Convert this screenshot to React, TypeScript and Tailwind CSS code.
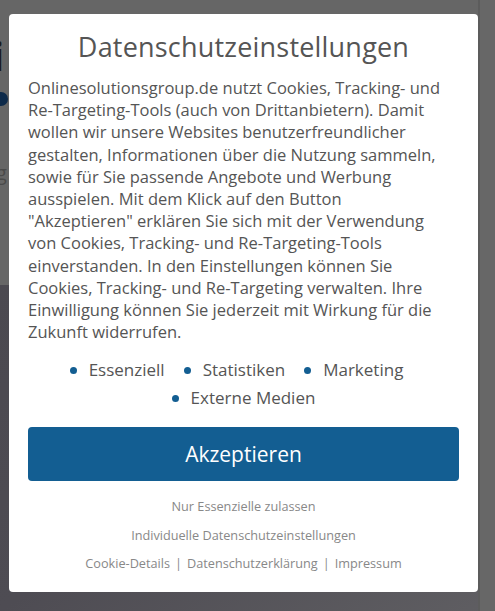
import React from "react";

const bodyLines = [
  "Onlinesolutionsgroup.de nutzt Cookies, Tracking- und",
  "Re-Targeting-Tools (auch von Drittanbietern). Damit",
  "wollen wir unsere Websites benutzerfreundlicher",
  "gestalten, Informationen über die Nutzung sammeln,",
  "sowie für Sie passende Angebote und Werbung",
  "ausspielen. Mit dem Klick auf den Button",
  "\"Akzeptieren\" erklären Sie sich mit der Verwendung",
  "von Cookies, Tracking- und Re-Targeting-Tools",
  "einverstanden. In den Einstellungen können Sie",
  "Cookies, Tracking- und Re-Targeting verwalten. Ihre",
  "Einwilligung können Sie jederzeit mit Wirkung für die",
  "Zukunft widerrufen.",
];

function Bullet({ label }: { label: string }) {
  return (
    <span className="inline-flex items-center gap-[12px]">
      <span className="w-[7px] h-[7px] rounded-full bg-[#135e92]" />
      <span>{label}</span>
    </span>
  );
}

export default function App() {
  return (
    <div
      className="relative w-[495px] h-[611px] overflow-hidden"
      style={{ fontFamily: '"Open Sans", "Noto Sans", sans-serif' }}
    >
      {/* page behind overlay */}
      <div className="flex flex-col w-full h-full bg-[#666666]">
        <div className="h-[285px] pl-0 pt-[36px] flex flex-col">
          <div className="text-[40px] leading-[40px] font-bold text-[#1a1a1a] -ml-[8px]">i</div>
          <div className="w-[8px] h-[14px] rounded-r-full bg-[#0d2a4a] mt-[16px]" />
          <div className="text-[20px] text-[#4a4a4a] mt-[52px] -ml-[4px]">g</div>
        </div>
        <div className="flex-1 bg-gradient-to-br from-[#4b4950] via-[#4e4c53] to-[#5f5e62]" />
      </div>
      <div className="absolute right-0 top-0 w-[17px] h-full bg-[#676767] border-l-2 border-[#5c5c5c]" />

      {/* modal */}
      <div className="absolute left-[9px] top-[14px] w-[469px] h-[578px] bg-white rounded-[4px] px-[19px] pt-[16px] flex flex-col text-[#555555]">
        <h1 className="text-center text-[27px] leading-[34px] text-[#555555] tracking-[0.2px]">
          Datenschutzeinstellungen
        </h1>
        <div className="mt-[13px] text-[16.5px] leading-[22.2px]">
          {bodyLines.map((l, i) => (
            <div key={i} className="whitespace-nowrap">
              {l}
            </div>
          ))}
        </div>
        <div className="mt-[13px] text-[17px] leading-[28px] flex flex-col items-center">
          <div className="flex gap-[19px] pr-[14px]">
            <Bullet label="Essenziell" />
            <Bullet label="Statistiken" />
            <Bullet label="Marketing" />
          </div>
          <div className="flex">
            <Bullet label="Externe Medien" />
          </div>
        </div>
        <button className="mt-[15px] h-[54px] w-full rounded-[4px] bg-[#135e92] text-white text-[21px]">
          Akzeptieren
        </button>
        <div className="mt-[11px] flex flex-col items-center text-[12.7px] leading-[28.5px] text-[#888888]">
          <div>Nur Essenzielle zulassen</div>
          <div>Individuelle Datenschutzeinstellungen</div>
          <div className="flex gap-[5px]">
            <span>Cookie-Details</span>
            <span>|</span>
            <span>Datenschutzerklärung</span>
            <span>|</span>
            <span>Impressum</span>
          </div>
        </div>
      </div>
    </div>
  );
}
